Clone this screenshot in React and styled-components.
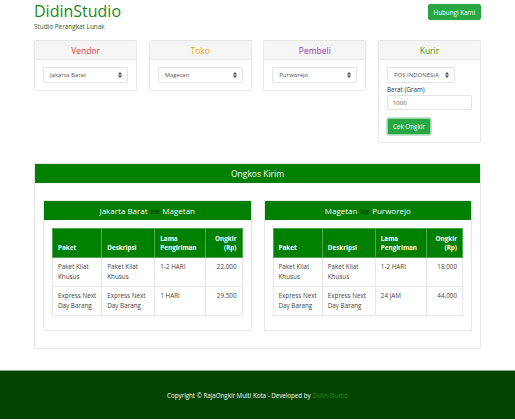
import React from 'react';
import styled, { createGlobalStyle } from 'styled-components';

const GlobalStyle = createGlobalStyle`
  html, body {
    margin: 0;
    padding: 0;
    background: #fff;
    font-family: "Open Sans", "Noto Sans", sans-serif;
    color: #333;
  }
  * { box-sizing: border-box; }
`;

const Container = styled.div`
  width: 447px;
  margin: 0 auto;
`;

const Header = styled.header`
  display: flex;
  justify-content: space-between;
  align-items: flex-start;
  padding-top: 2px;
`;

const Brand = styled.div`
  display: flex;
  flex-direction: column;
`;

const Logo = styled.h1`
  margin: 0;
  font-size: 16px;
  font-weight: 400;
  line-height: 18px;
  color: #1a8a1a;
`;

const Tagline = styled.div`
  margin-top: 2px;
  font-size: 6.4px;
  line-height: 9px;
  color: #2d5a2d;
`;

const Button = styled.button`
  font-family: inherit;
  font-size: 6.3px;
  color: #fff;
  background: #28a745;
  border: 1px solid ${p => (p.$focus ? '#9fd6a8' : '#28a745')};
  box-shadow: ${p => (p.$focus ? '0 0 0 1px #c5e8cb' : 'none')};
  border-radius: 2px;
  padding: 0 5px;
  height: ${p => p.$h || 16}px;
  margin-top: ${p => p.$mt || 0}px;
  cursor: pointer;
`;

const CardRow = styled.div`
  display: grid;
  grid-template-columns: repeat(4, 1fr);
  column-gap: 11.5px;
  align-items: start;
  margin-top: 9px;
`;

const Card = styled.div`
  border: 1px solid #e6e6e6;
  border-radius: 2px;
  background: #fff;
`;

const CardHead = styled.div`
  height: 19px;
  background: #f5f5f5;
  border-bottom: 1px solid #e6e6e6;
  display: flex;
  align-items: center;
  justify-content: center;
  font-size: 8.5px;
  color: ${p => p.$color};
`;

const CardBody = styled.div`
  padding: 7px 8px 7px 8px;
  display: flex;
  flex-direction: column;
  align-items: flex-start;
`;

const SelectBox = styled.div`
  width: ${p => (p.$auto ? 'auto' : '100%')};
  height: 16px;
  border: 1px solid #e3e3e3;
  border-radius: 2px;
  display: flex;
  align-items: center;
  justify-content: space-between;
  gap: 6px;
  padding: 0 5px 0 6px;
  font-size: 6px;
  color: #555;
`;

const Label = styled.div`
  font-size: 6.3px;
  line-height: 9px;
  color: #333;
  margin: 2px 0 1px;
`;

const Input = styled.div`
  width: 100%;
  height: 15px;
  border: 1px solid #e3e3e3;
  border-radius: 2px;
  padding: 0 5px;
  display: flex;
  align-items: center;
  font-size: 6px;
  color: #555;
  margin-bottom: 8px;
`;

const Panel = styled.div`
  margin-top: 20px;
  border: 1px solid #e6e6e6;
  border-radius: 2px;
`;

const PanelHead = styled.div`
  height: 19px;
  background: #008000;
  color: #fff;
  display: flex;
  align-items: center;
  justify-content: center;
  font-size: ${p => (p.$small ? 8 : 8.5)}px;
`;

const PanelBody = styled.div`
  padding: 17px 8px 17px 8px;
  display: grid;
  grid-template-columns: 1fr 1fr;
  column-gap: 12px;
`;

const Inner = styled.div`
  border: 1px solid #e6e6e6;
  border-radius: 2px;
`;

const InnerBody = styled.div`
  padding: 8px 8px 14px;
`;

const Ke = styled.span`
  color: #111;
  margin: 0 3px;
`;

const Table = styled.table`
  width: 100%;
  border-collapse: collapse;
  table-layout: fixed;
  font-size: 6.3px;
`;

const Th = styled.th`
  background: #008000;
  color: #fff;
  font-weight: 700;
  text-align: ${p => (p.$right ? 'right' : 'left')};
  vertical-align: bottom;
  border: 1px solid #4fa84f;
  padding: 3px 5px 5px;
  height: 29px;
  line-height: 9px;
`;

const Td = styled.td`
  border: 1px solid #e6e6e6;
  padding: 4px 5px 3px;
  height: 29px;
  vertical-align: top;
  line-height: 9.5px;
  color: #444;
  text-align: ${p => (p.$right ? 'right' : 'left')};
`;

const Footer = styled.footer`
  margin-top: 21px;
  height: 49px;
  background: #004400;
  border-top: 1px solid #8fae8f;
  display: flex;
  align-items: center;
  justify-content: center;
  font-size: 6.2px;
  color: #fff;
`;

const FooterLink = styled.span`
  color: #0a9a0a;
  margin-left: 2px;
`;

const Caret = () => (
  <svg width="4" height="6" viewBox="0 0 4 6">
    <path d="M0 2.4 L2 0 L4 2.4 Z M0 3.6 L2 6 L4 3.6 Z" fill="#444" />
  </svg>
);

const Select = ({ value, auto }) => (
  <SelectBox $auto={auto}>
    <span>{value}</span>
    <Caret />
  </SelectBox>
);

const results = [
  {
    from: 'Jakarta Barat',
    to: 'Magetan',
    rows: [
      ['Paket Kilat Khusus', 'Paket Kilat Khusus', '1-2 HARI', '22.000'],
      ['Express Next Day Barang', 'Express Next Day Barang', '1 HARI', '29.500'],
    ],
  },
  {
    from: 'Magetan',
    to: 'Purworejo',
    rows: [
      ['Paket Kilat Khusus', 'Paket Kilat Khusus', '1-2 HARI', '18.000'],
      ['Express Next Day Barang', 'Express Next Day Barang', '24 JAM', '44.000'],
    ],
  },
];

const ResultTable = ({ data }) => (
  <Inner>
    <PanelHead $small>
      {data.from}
      <Ke>ke</Ke>
      {data.to}
    </PanelHead>
    <InnerBody>
      <Table>
        <colgroup>
          <col style={{ width: '26%' }} />
          <col style={{ width: '28%' }} />
          <col style={{ width: '27%' }} />
          <col style={{ width: '19%' }} />
        </colgroup>
        <thead>
          <tr>
            <Th>Paket</Th>
            <Th>Deskripsi</Th>
            <Th>Lama Pengiriman</Th>
            <Th $right>Ongkir (Rp)</Th>
          </tr>
        </thead>
        <tbody>
          {data.rows.map((r, i) => (
            <tr key={i}>
              <Td>{r[0]}</Td>
              <Td>{r[1]}</Td>
              <Td>{r[2]}</Td>
              <Td $right>{r[3]}</Td>
            </tr>
          ))}
        </tbody>
      </Table>
    </InnerBody>
  </Inner>
);

export default function App() {
  return (
    <>
      <GlobalStyle />
      <Container>
        <Header>
          <Brand>
            <Logo>DidinStudio</Logo>
            <Tagline>Studio Perangkat Lunak</Tagline>
          </Brand>
          <Button $h={16} $mt={2}>Hubungi Kami</Button>
        </Header>

        <CardRow>
          <Card>
            <CardHead $color="#f03c3c">Vendor</CardHead>
            <CardBody>
              <Select value="Jakarta Barat" />
            </CardBody>
          </Card>
          <Card>
            <CardHead $color="#f5a623">Toko</CardHead>
            <CardBody>
              <Select value="Magetan" />
            </CardBody>
          </Card>
          <Card>
            <CardHead $color="#a030b0">Pembeli</CardHead>
            <CardBody>
              <Select value="Purworejo" />
            </CardBody>
          </Card>
          <Card>
            <CardHead $color="#3a9a20">Kurir</CardHead>
            <CardBody>
              <Select value="POS INDONESIA" auto />
              <Label>Berat (Gram)</Label>
              <Input>1000</Input>
              <Button $h={17} $focus>Cek Ongkir</Button>
            </CardBody>
          </Card>
        </CardRow>

        <Panel>
          <PanelHead>Ongkos Kirim</PanelHead>
          <PanelBody>
            {results.map((d, i) => (
              <ResultTable key={i} data={d} />
            ))}
          </PanelBody>
        </Panel>
      </Container>
      <Footer>
        Copyright © RajaOngkir Multi Kota - Developed by
        <FooterLink>Didin Studio</FooterLink>
      </Footer>
    </>
  );
}
